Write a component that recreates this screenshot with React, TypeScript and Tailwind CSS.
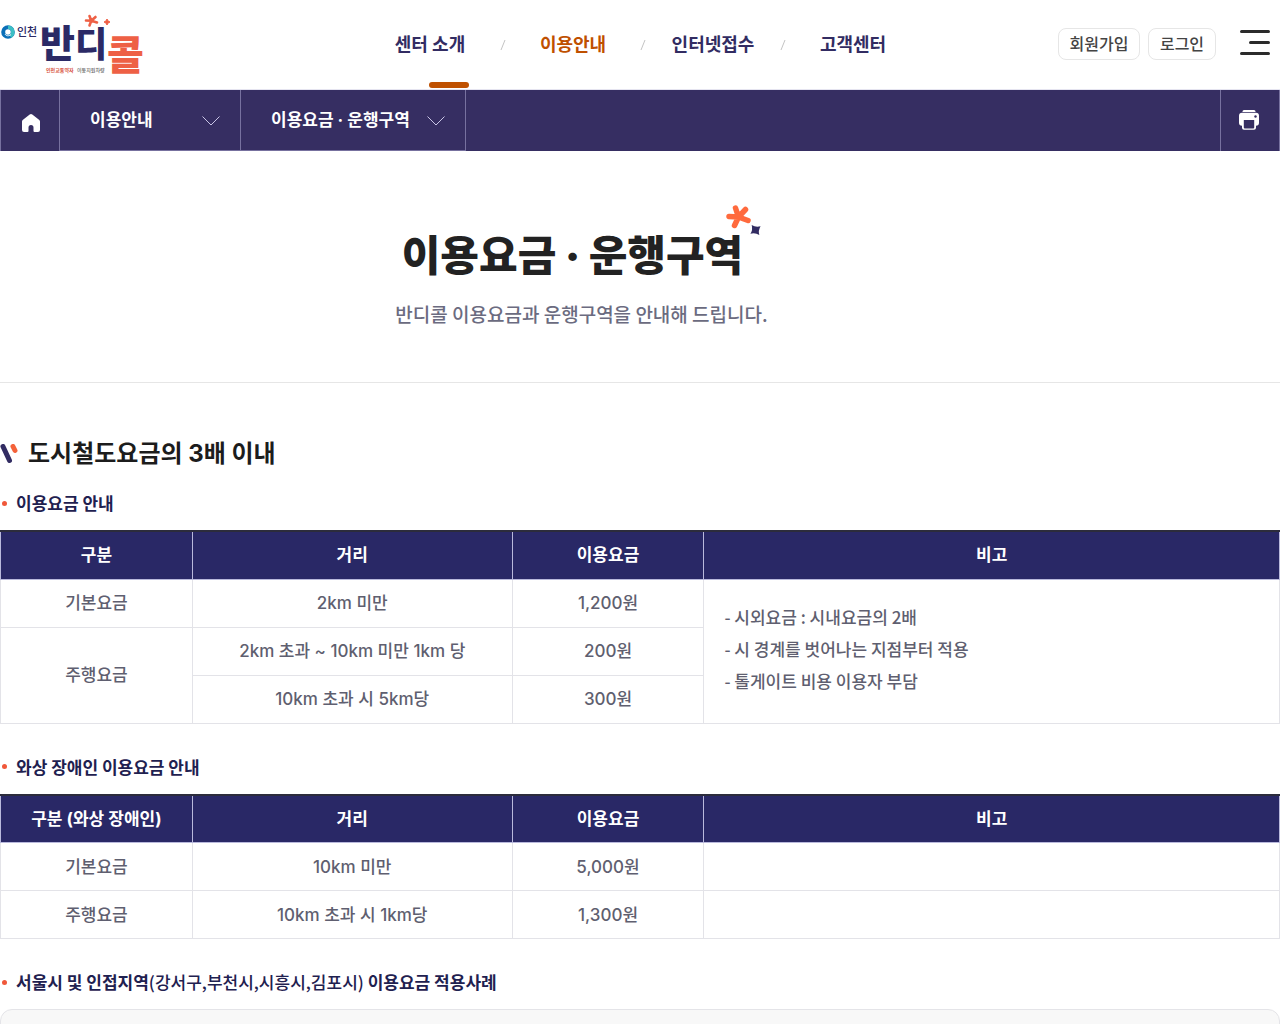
import type { ReactNode } from 'react'

const menus = [
  { name: '센터 소개', width: 'w-[138px]', active: false },
  { name: '이용안내', width: 'w-[132px]', active: true },
  { name: '인터넷접수', width: 'w-[132px]', active: false },
  { name: '고객센터', width: 'w-[132px]', active: false },
]

const Logo = () => (
  <svg width="148" height="89" viewBox="0 0 148 89" role="img" aria-label="인천 반디콜">
    <circle cx="8" cy="32" r="4.8" fill="none" stroke="#0b6fb8" strokeWidth="4" />
    <path d="M8 27.2a4.8 4.8 0 0 1 4.8 4.8c0 2-1 3.600-2.500 4.300" fill="none" stroke="#3dbfc4" strokeWidth="3.500" />
    <path d="M5 34c1 2 4 2.500 6 .5" fill="none" stroke="#fff" strokeWidth="1" />
    <text x="17" y="36" fontSize="11" fontWeight="500" fill="#2b2a66">인천</text>
    <text x="40" y="57" fontSize="38" fontWeight="900" fill="#2b2a66">반</text>
    <text x="75" y="57" fontSize="35" fontWeight="900" fill="#2b2a66">디</text>
    <text x="107" y="70" fontSize="40" fontWeight="900" fill="#ee6045">콜</text>
    <text x="46" y="72" fontSize="5" fontWeight="700" fill="#d8503c">인천교통약자</text>
    <text x="77" y="72" fontSize="5" fontWeight="500" fill="#666">이동지원차량</text>
    <path d="M89.500 16l1.800 4.800M95.500 17l-4.200 3.800M97 22.500l-5.700-1.700M89.500 25.500l1.800-4.700M86 20.500l5.300.3" stroke="#ee6045" strokeWidth="2.600" strokeLinecap="round" />
    <path d="M107 19l1 2 2 1-2 1-1 2-1-2-2-1 2-1z" fill="#ee6045" stroke="#ee6045" />
  </svg>
)

const Chevron = () => (
  <svg width="18" height="10" viewBox="0 0 18 10" fill="none" stroke="#c9c5e6" aria-hidden="true">
    <path d="M.5 .5l8.500 8.500 8.500-8.500" />
  </svg>
)

const Header = () => (
  <header className="flex h-[90px] items-center border-b border-[#e5e4f0] bg-white">
    <div className="flex-1">
      <a href="#" className="inline-block align-middle"><Logo /></a>
    </div>
    <nav className="relative">
      <ul className="flex items-center text-lg font-bold text-[#322c62]">
        {menus.map((menu, i) => (
          <li key={menu.name} className="flex items-center">
            {i > 0 && (
              <svg width="8" height="10" viewBox="0 0 8 10" stroke="#c4c4c4" aria-hidden="true">
                <path d="M6 0L2 10" />
              </svg>
            )}
            <a href="#" className={`${menu.width} text-center ${menu.active ? 'text-[#bf5000]' : ''}`}>
              {menu.name}
            </a>
          </li>
        ))}
      </ul>
      <span className="absolute top-[51px] left-[68px] h-1.5 w-10 rounded-full bg-[#bf5000]" />
    </nav>
    <div className="flex flex-1 items-center justify-end">
      <div className="mr-6 flex gap-2 pb-0.5 font-medium text-[#444]">
        <a href="#" className="flex h-8 w-[82px] items-center justify-center rounded-lg border border-[#e6e6e6]">
          회원가입
        </a>
        <a href="#" className="flex h-8 w-[68px] items-center justify-center rounded-lg border border-[#e6e6e6]">
          로그인
        </a>
      </div>
      <button type="button" aria-label="전체메뉴" className="mr-2.5 flex flex-col items-end gap-2 pb-1">
        <span className="h-[3px] w-[30px] rounded-full bg-[#2b2b2b]" />
        <span className="h-[3px] w-[21px] rounded-full bg-[#2b2b2b]" />
        <span className="h-[3px] w-[30px] rounded-full bg-[#2b2b2b]" />
      </button>
    </div>
  </header>
)

const LocationBar = () => (
  <div className="flex h-[61px] bg-[#362e62] text-[17px] font-bold text-white">
    <a href="#" aria-label="홈" className="flex w-[60px] items-center justify-center border-x border-[#77719f] pt-1 pl-0.5">
      <svg width="20" height="20" viewBox="0 0 20 20" fill="#fff" aria-hidden="true">
        <path d="M8.700 1.500a2 2 0 0 1 2.600 0l7 5.600a2 2 0 0 1 .7 1.500V17a2 2 0 0 1-2 2h-3.500a1 1 0 0 1-1-1v-3.500a2.500 2.500 0 0 0-5 0V18a1 1 0 0 1-1 1H3a2 2 0 0 1-2-2V8.600a2 2 0 0 1 .7-1.500z" />
      </svg>
    </a>
    <button type="button" className="flex w-[181px] items-center justify-between border-r border-b border-[#77719f] pt-0.5 pr-5 pl-[30px]">
      이용안내 <Chevron />
    </button>
    <button type="button" className="flex w-[225px] items-center justify-between border-r border-b border-[#77719f] pt-0.5 pr-5 pl-[30px]">
      이용요금 · 운행구역 <Chevron />
    </button>
    <button type="button" aria-label="인쇄" className="ml-auto flex w-[60px] items-center justify-center border-x border-[#77719f] pr-0.5 pb-0.5">
      <svg width="20" height="20" viewBox="0 0 20 20" aria-hidden="true">
        <path d="M5 0h10a1.500 1.500 0 0 1 1.500 1.500V2h-13v-.5A1.500 1.500 0 0 1 5 0z" fill="#fff" />
        <path d="M3 2.800h14a3 3 0 0 1 3 3v7a3 3 0 0 1-3 3v2a2 2 0 0 1-2 2H5a2 2 0 0 1-2-2v-2a3 3 0 0 1-3-3v-7a3 3 0 0 1 3-3z" fill="#fff" />
        <path d="M4.800 10h10.400v7.500a1 1 0 0 1-1 1H5.800a1 1 0 0 1-1-1z" fill="#362e62" />
        <circle cx="16.500" cy="6.500" r="1.200" fill="#362e62" />
      </svg>
    </button>
  </div>
)

const PageTitle = () => (
  <section className="flex h-[232px] flex-col items-center border-b border-[#e6e6e6] pt-[73px] pr-[117px]">
    <h1 className="relative pr-[18px] text-[42px] leading-[64px] font-black text-[#222]">
      이용요금 · 운행구역
      <svg className="absolute -top-5 right-0" width="36" height="34" viewBox="0 0 36 34" aria-hidden="true">
        <path d="M10.500 4l3 9M20.500 5.500L13.500 13M23 16.500L13.500 13M9.500 21.500L13.500 13M4 12.500L13.500 13" stroke="#ff6a3d" strokeWidth="5.500" strokeLinecap="round" />
        <path d="M26 21.500q4.500 2 9 0q-2 4.500 0 9q-4.500-2-9 0q2-4.500 0-9z" fill="#322c62" transform="rotate(8 30.500 26)" />
      </svg>
    </h1>
    <p className="mt-3 font-['Noto_Sans_CJK_KR',sans-serif] text-[19px] leading-7 font-medium text-[#6b6b80]">
      반디콜 이용요금과 운행구역을 안내해 드립니다.
    </p>
  </section>
)

const SubTitle = ({ children }: { children: ReactNode }) => (
  <h3 className="flex h-[22px] items-center font-['Noto_Sans_CJK_KR',sans-serif] text-[17px] font-bold text-[#1f2150]">
    <span className="mr-[9px] ml-0.5 size-[5px] rounded-full bg-[#f0583a]" />
    <span>{children}</span>
  </h3>
)

const FeeTable = ({ first, children }: { first: string; children: ReactNode }) => (
  <table className="mt-4 w-full table-fixed border-collapse border-t-2 border-[#2c2c3c] text-center text-[17px] leading-6 font-medium text-[#5f5f70]">
    <colgroup>
      <col className="w-[15%]" />
      <col className="w-[25%]" />
      <col className="w-[15%]" />
      <col className="w-[45%]" />
    </colgroup>
    <thead className="bg-[#292866] text-white">
      <tr className="h-12">
        {[first, '거리', '이용요금', '비고'].map((name) => (
          <th key={name} scope="col" className="border-x border-b border-[#b9b9dc] font-bold">{name}</th>
        ))}
      </tr>
    </thead>
    <tbody>{children}</tbody>
  </table>
)

const Cell = ({ children, rowSpan }: { children?: ReactNode; rowSpan?: number }) => (
  <td rowSpan={rowSpan} className="border border-[#e3e3e8]">{children}</td>
)

const App = () => (
  <div className="bg-white font-['Inter','Noto_Sans_CJK_KR',sans-serif]">
    <Header />
    <LocationBar />
    <PageTitle />
    <main className="pt-[53px]">
      <h2 className="flex h-9 items-center text-2xl font-bold text-[#1c1c1c]">
        <svg className="mr-2.5" width="18" height="20" viewBox="0 0 18 20" fill="none" strokeWidth="5" strokeLinecap="round" aria-hidden="true">
          <path d="M3 2.500l6.500 14" stroke="#322c62" />
          <path d="M13 2.500l2 4" stroke="#f4623a" />
        </svg>
        도시철도요금의 3배 이내
      </h2>
      <div className="mt-5">
        <SubTitle>이용요금 안내</SubTitle>
        <FeeTable first="구분">
          <tr className="h-12">
            <Cell>기본요금</Cell>
            <Cell>2km 미만</Cell>
            <Cell>1,200원</Cell>
            <td rowSpan={3} className="border border-[#e3e3e8] px-5 pb-1 text-left font-['Noto_Sans_CJK_KR',sans-serif] leading-8">
              <p>- 시외요금 : 시내요금의 2배</p>
              <p>- 시 경계를 벗어나는 지점부터 적용</p>
              <p>- 톨게이트 비용 이용자 부담</p>
            </td>
          </tr>
          <tr className="h-12">
            <Cell rowSpan={2}>주행요금</Cell>
            <Cell>2km 초과 ~ 10km 미만 1km 당</Cell>
            <Cell>200원</Cell>
          </tr>
          <tr className="h-12">
            <Cell>10km 초과 시 5km당</Cell>
            <Cell>300원</Cell>
          </tr>
        </FeeTable>
      </div>
      <div className="mt-8">
        <SubTitle>와상 장애인 이용요금 안내</SubTitle>
        <FeeTable first="구분 (와상 장애인)">
          <tr className="h-12">
            <Cell>기본요금</Cell>
            <Cell>10km 미만</Cell>
            <Cell>5,000원</Cell>
            <Cell />
          </tr>
          <tr className="h-12">
            <Cell>주행요금</Cell>
            <Cell>10km 초과 시 1km당</Cell>
            <Cell>1,300원</Cell>
            <Cell />
          </tr>
        </FeeTable>
      </div>
      <div className="mt-8">
        <SubTitle>
          서울시 및 인접지역<span className="font-medium">(강서구,부천시,시흥시,김포시)</span> 이용요금 적용사례
        </SubTitle>
        <div className="mt-4 h-24 rounded-xl border border-[#e4e4e8] bg-[#f8f8f8]" />
      </div>
    </main>
  </div>
)

export default App
